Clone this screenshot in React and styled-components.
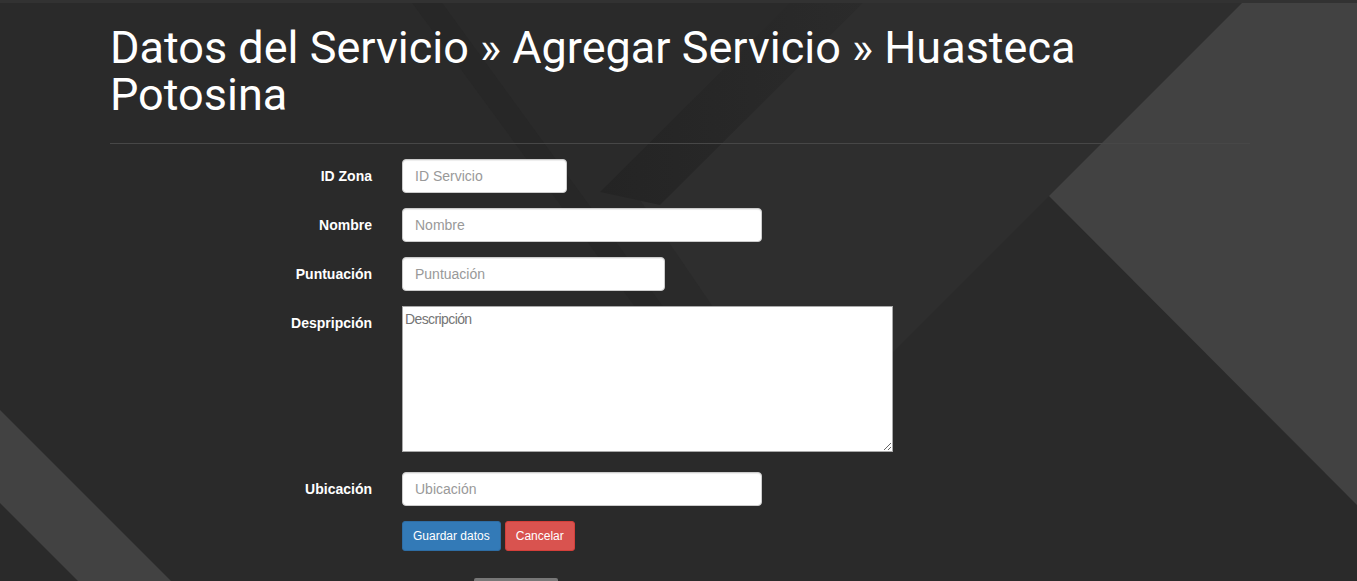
import React from 'react';
import styled, { createGlobalStyle } from 'styled-components';

const GlobalStyle = createGlobalStyle`
  html, body {
    margin: 0;
    padding: 0;
    background: #2a2a2a;
    overflow: hidden;
  }
  * {
    box-sizing: border-box;
  }
`;

const Page = styled.div`
  position: relative;
  width: 100%;
  height: 581px;
  overflow: hidden;
  background: #2a2a2a;
  font-family: 'Liberation Sans', Arial, sans-serif;
`;

const Backdrop = styled.svg`
  position: absolute;
  top: 0;
  left: 0;
  width: 1357px;
  height: 581px;
  z-index: 0;
`;

const Container = styled.div`
  position: relative;
  z-index: 1;
  width: 1140px;
  margin-left: 110px;
  padding-top: 24px;
`;

const Title = styled.h1`
  margin: 0;
  font-family: Roboto, 'Liberation Sans', sans-serif;
  font-size: 45px;
  font-weight: 400;
  line-height: 47px;
  color: #fff;
`;

const Rule = styled.hr`
  margin: 25px 0 15px;
  border: 0;
  border-top: 1px solid #474747;
`;

const Form = styled.form`
  display: flex;
  flex-direction: column;
`;

const Row = styled.div`
  display: grid;
  grid-template-columns: 262px 1fr;
  column-gap: 30px;
  margin-bottom: ${(props) => props.$gap ?? 15}px;
`;

const Label = styled.label`
  padding-top: 7px;
  text-align: right;
  font-size: 14px;
  font-weight: 700;
  line-height: 20px;
  color: #fff;
`;

const Input = styled.input`
  display: block;
  width: ${(props) => props.$width}px;
  height: 34px;
  padding: 6px 12px;
  font-family: 'Liberation Sans', Arial, sans-serif;
  font-size: 14px;
  line-height: 20px;
  color: #555;
  background: #fff;
  border: 1px solid #ccc;
  border-radius: 4px;
  box-shadow: inset 0 1px 1px rgba(0, 0, 0, 0.075);
  outline: 0;

  &::placeholder {
    color: #999;
    opacity: 1;
  }
`;

const TextArea = styled.textarea`
  display: block;
  width: 491px;
  height: 146px;
  padding: 3px 2px;
  font-family: 'Liberation Sans', Arial, sans-serif;
  font-size: 14px;
  letter-spacing: -0.6px;
  line-height: 18px;
  color: #333;
  background: #fff;
  border: 1px solid #a9a9a9;
  border-radius: 0;
  outline: 0;

  &::placeholder {
    color: #757575;
    opacity: 1;
  }
`;

const Actions = styled.div`
  display: flex;
  gap: 4px;
`;

const Button = styled.button`
  height: 30px;
  padding: 5px 10px;
  font-family: 'Liberation Sans', Arial, sans-serif;
  font-size: 12px;
  line-height: 18px;
  color: #fff;
  border: 1px solid ${(props) => (props.$variant === 'danger' ? '#d43f3a' : '#2e6da4')};
  background: ${(props) => (props.$variant === 'danger' ? '#d9534f' : '#337ab7')};
  border-radius: 3px;
  cursor: pointer;
`;

const BottomTab = styled.div`
  width: 84px;
  height: 30px;
  margin: 27px 0 0 72px;
  background: #777;
  border-radius: 2px 2px 0 0;
`;

const Background = () => (
  <Backdrop viewBox='0 0 1357 581' preserveAspectRatio='none'>
    <defs>
      <linearGradient id='shade' x1='0' y1='0' x2='1' y2='0'>
        <stop offset='0' stopColor='#242424' />
        <stop offset='1' stopColor='#2b2b2b' />
      </linearGradient>
    </defs>
    <rect x='0' y='0' width='1357' height='581' fill='#2a2a2a' />
    <polygon points='850,0 1245,0 890,355 715,310 640,200' fill='#2e2e2e' />
    <polygon points='793,0 866,0 660,205 600,192' fill='url(#shade)' />
    <polygon points='410,0 440,0 680,330 652,330' fill='#272727' />
    <polygon points='1245,0 1357,0 1357,505 1049,196' fill='#424242' />
    <polygon points='0,410 171,581 78,581 0,503' fill='#424242' />
    <rect x='0' y='0' width='1357' height='3' fill='#323232' />
  </Backdrop>
);

const fields = [
  { label: 'ID Zona', placeholder: 'ID Servicio', width: 165 },
  { label: 'Nombre', placeholder: 'Nombre', width: 360 },
  { label: 'Puntuación', placeholder: 'Puntuación', width: 263 },
];

const App = () => {
  return (
    <Page>
      <GlobalStyle />
      <Background />
      <Container>
        <Title>Datos del Servicio » Agregar Servicio » Huasteca Potosina</Title>
        <Rule />
        <Form onSubmit={(e) => e.preventDefault()}>
          {fields.map((field) => (
            <Row key={field.label}>
              <Label>{field.label}</Label>
              <div>
                <Input type='text' placeholder={field.placeholder} $width={field.width} />
              </div>
            </Row>
          ))}
          <Row $gap={20}>
            <Label>Despripción</Label>
            <div>
              <TextArea placeholder='Descripción' />
            </div>
          </Row>
          <Row>
            <Label>Ubicación</Label>
            <div>
              <Input type='text' placeholder='Ubicación' $width={360} />
            </div>
          </Row>
          <Row $gap={0}>
            <span />
            <div>
              <Actions>
                <Button type='submit'>Guardar datos</Button>
                <Button type='button' $variant='danger'>
                  Cancelar
                </Button>
              </Actions>
              <BottomTab />
            </div>
          </Row>
        </Form>
      </Container>
    </Page>
  );
};

export default App;
